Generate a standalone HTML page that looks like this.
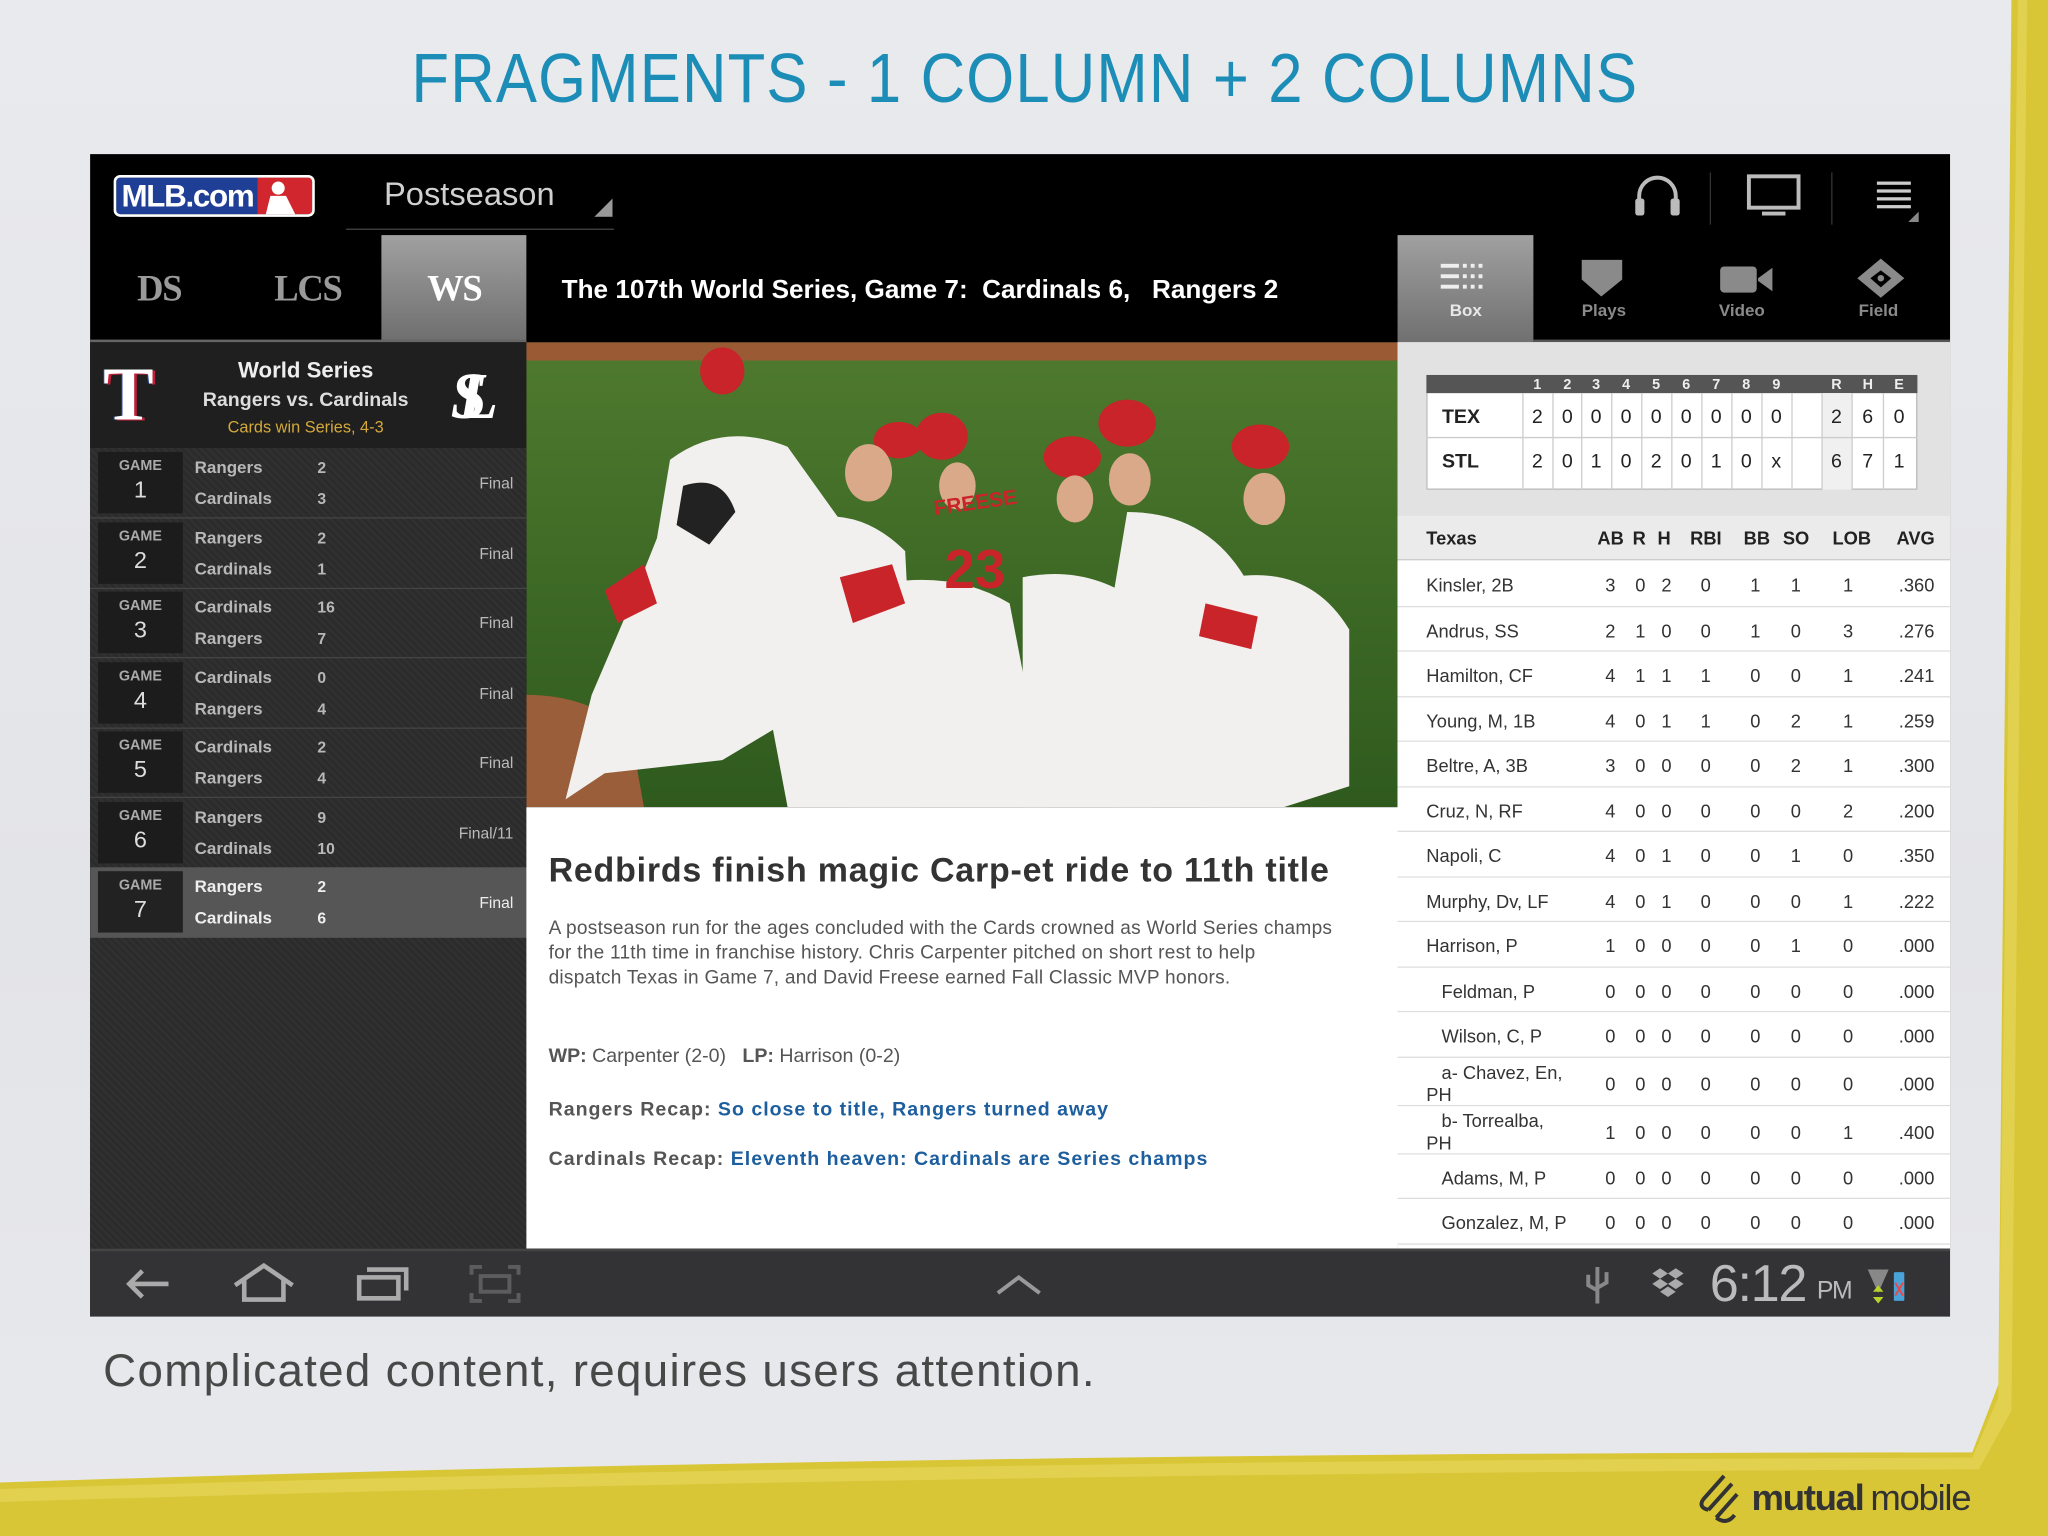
<!DOCTYPE html>
<html><head><meta charset="utf-8"><style>
*{margin:0;padding:0;box-sizing:border-box}
html,body{width:2048px;height:1536px;overflow:hidden;background:#e6e7ea}
#w{position:absolute;left:0;top:0;width:1568px;height:1176px;transform:scale(1.306122);transform-origin:0 0;font-family:"Liberation Sans",sans-serif}
.a{position:absolute}
.t{position:absolute;white-space:nowrap}
.gr{position:absolute;left:6px;width:328px;height:51px}
.gb{position:absolute;left:0;top:2px;width:65px;height:47px;background:#1c1c1c;color:#aaa;text-align:center}
.gb b{display:block;font-size:11px;margin-top:5px;font-weight:bold}
.gb i{display:block;font-style:normal;font-size:18px;color:#ddd;margin-top:2px}
.gn{position:absolute;left:74px;font-size:13px;color:#b8b8b8;font-weight:bold}
.gs{position:absolute;left:168px;font-size:12px;color:#b8b8b8;font-weight:bold}
.gf{position:absolute;right:10px;top:19px;font-size:12px;color:#bbb}
.sr{position:absolute;left:0;width:423px;height:34px;border-bottom:1px solid #ddd;background:#fff;font-size:14px;color:#333}
.sr span{position:absolute;top:10px}
</style></head><body>
<div id="w">
<div class="a" style="left:0;top:0;width:1568px;height:1176px;background:linear-gradient(180deg,#e9eaed,#e3e4e8 60%,#e8e9ec)"></div>
<svg class="a" style="left:0;top:0" width="1568" height="1176">
<path d="M0 1135 Q700 1112 1510 1112 L1530 1060 L1540 0 L1568 0 L1568 1176 L0 1176Z" fill="#d9c636"/>
<path d="M0 1140 Q700 1118 1510 1116 L1530 1070 L1545 0 L1552 0 L1540 1080 L1515 1125 Q700 1128 0 1150Z" fill="#e6d860" opacity=".6"/>
</svg>
<div class="t" style="left:315px;top:30px;font-size:53px;color:#1b8db6;letter-spacing:1px;transform:scaleX(.89);transform-origin:0 0">FRAGMENTS - 1 COLUMN + 2 COLUMNS</div>

<div class="a" style="left:69px;top:118px;width:1424px;height:890px;background:#000;overflow:hidden">
 <div class="a" style="left:18px;top:16px;width:154px;height:32px;border:2px solid #fff;border-radius:5px;background:linear-gradient(90deg,#1e3f95 72%,#d2262e 72%);overflow:hidden">
  <div class="t" style="left:4px;top:1px;font-size:24px;font-weight:bold;color:#fff;letter-spacing:-1px">MLB.com</div>
  <svg class="a" style="left:104px;top:0" width="40" height="30"><circle cx="20" cy="8" r="5" fill="#fff"/><path d="M10 30 L14 14 L26 14 L34 30Z" fill="#fff"/></svg>
 </div>
 <div class="t" style="left:225px;top:17px;font-size:25px;color:#d0d0d0">Postseason</div>
 <div class="a" style="left:196px;top:57px;width:205px;height:1px;background:#444"></div>
 <svg class="a" style="left:386px;top:34px" width="14" height="14"><path d="M14 0 L14 14 L0 14Z" fill="#999"/></svg>
 <svg class="a" style="left:1180px;top:14px" width="40" height="36"><path d="M6 30 V18 A14 14 0 0 1 34 18 V30" fill="none" stroke="#bbb" stroke-width="3"/><rect x="3" y="20" width="7" height="13" rx="2" fill="#bbb"/><rect x="30" y="20" width="7" height="13" rx="2" fill="#bbb"/></svg>
 <svg class="a" style="left:1268px;top:15px" width="44" height="34"><rect x="2" y="2" width="38" height="24" fill="none" stroke="#bbb" stroke-width="3"/><rect x="12" y="29" width="18" height="3" fill="#bbb"/></svg>
 <div class="a" style="left:1240px;top:14px;width:1px;height:40px;background:#333"></div>
 <div class="a" style="left:1333px;top:14px;width:1px;height:40px;background:#333"></div>
 <svg class="a" style="left:1366px;top:18px" width="36" height="36"><g fill="#ccc"><rect x="2" y="3" width="26" height="2.5"/><rect x="2" y="9" width="26" height="2.5"/><rect x="2" y="15" width="26" height="2.5"/><rect x="2" y="21" width="26" height="2.5"/></g><path d="M34 26 L34 34 L26 34Z" fill="#888"/></svg>
 <div class="t" style="left:36px;top:88px;font-size:28px;font-family:'Liberation Serif',serif;font-weight:bold;color:#9a9a9a;letter-spacing:-1px">DS</div>
 <div class="t" style="left:141px;top:88px;font-size:28px;font-family:'Liberation Serif',serif;font-weight:bold;color:#9a9a9a;letter-spacing:-1px">LCS</div>
 <div class="a" style="left:223px;top:62px;width:111px;height:82px;background:linear-gradient(180deg,#a0a0a0,#6e6e6e)"></div>
 <div class="t" style="left:258px;top:88px;font-size:28px;font-family:'Liberation Serif',serif;font-weight:bold;color:#fff;letter-spacing:-1px">WS</div>
 <div class="a" style="left:0;top:142px;width:334px;height:3px;background:#666"></div>
 <div class="t" style="left:361px;top:93px;font-size:20px;font-weight:bold;color:#fff">The 107th World Series, Game 7:&nbsp; Cardinals 6, &nbsp; Rangers 2</div>
 <div class="a" style="left:1001px;top:62px;width:104px;height:82px;background:linear-gradient(180deg,#a0a0a0,#707070)"></div>
 <svg class="a" style="left:1034px;top:82px" width="36" height="26"><g fill="#eee"><rect x="0" y="2" width="14" height="3"/><rect x="17" y="2" width="3" height="3"/><rect x="23" y="2" width="3" height="3"/><rect x="29" y="2" width="3" height="3"/><rect x="0" y="10" width="14" height="3"/><rect x="17" y="10" width="3" height="3"/><rect x="23" y="10" width="3" height="3"/><rect x="29" y="10" width="3" height="3"/><rect x="0" y="18" width="14" height="3"/><rect x="17" y="18" width="3" height="3"/><rect x="23" y="18" width="3" height="3"/><rect x="29" y="18" width="3" height="3"/></g></svg>
 <div class="t" style="left:1041px;top:112px;font-size:13px;font-weight:bold;color:#e8e8e8">Box</div>
 <svg class="a" style="left:1141px;top:80px" width="34" height="30"><path d="M1 1 H32 V16 L16 29 L1 16Z" fill="#8a8a8a"/></svg>
 <div class="t" style="left:1142px;top:112px;font-size:13px;font-weight:bold;color:#8a8a8a">Plays</div>
 <svg class="a" style="left:1247px;top:85px" width="44" height="22"><rect x="1" y="1" width="28" height="20" rx="3" fill="#8a8a8a"/><path d="M30 10 L41 2 V20 L30 12Z" fill="#8a8a8a"/></svg>
 <div class="t" style="left:1247px;top:112px;font-size:13px;font-weight:bold;color:#8a8a8a">Video</div>
 <svg class="a" style="left:1351px;top:78px" width="40" height="34"><path d="M20 2 L38 17 L20 32 L2 17Z" fill="#8a8a8a"/><path d="M20 11 L28 17 L20 24 L12 17Z" fill="#000"/><circle cx="20" cy="17" r="2.5" fill="#8a8a8a"/></svg>
 <div class="t" style="left:1354px;top:112px;font-size:13px;font-weight:bold;color:#8a8a8a">Field</div>
 <div class="a" style="left:1105px;top:142px;width:319px;height:3px;background:#555"></div>

 <div class="a" style="left:0;top:144px;width:334px;height:694px;background:#2b2b2b;background-image:repeating-linear-gradient(45deg,rgba(255,255,255,.025) 0 2px,transparent 2px 4px)">
  <div class="a" style="left:0;top:0;width:334px;height:81px;background:#1f1f1f"></div>
  <div class="t" style="left:10px;top:6px;font-size:58px;font-family:'Liberation Serif',serif;font-weight:bold;color:#fff;text-shadow:2px 1px 0 #c0203a,-1px 0 0 #1e3f95">T</div>
  <div class="t" style="left:92px;top:12px;width:146px;text-align:center;font-size:17px;font-weight:bold;color:#eee">World Series</div>
  <div class="t" style="left:72px;top:36px;width:186px;text-align:center;font-size:15px;font-weight:bold;color:#ddd">Rangers vs. Cardinals</div>
  <div class="t" style="left:92px;top:58px;width:146px;text-align:center;font-size:12.5px;color:#d4a93a">Cards win Series, 4-3</div>
  <div class="t" style="left:276px;top:12px;font-size:50px;font-family:'Liberation Serif',serif;font-style:italic;font-weight:bold;color:#fff;letter-spacing:-22px">SL</div>
  <div class="gr" style="top:82px"><div class="gb"><b>GAME</b><i>1</i></div><div class="gn" style="top:6px">Rangers</div><div class="gs" style="top:7px">2</div><div class="gn" style="top:30px">Cardinals</div><div class="gs" style="top:31px">3</div><div class="gf">Final</div></div>
  <div class="a" style="left:0;top:134px;width:334px;height:1px;background:#444"></div>
  <div class="gr" style="top:136px"><div class="gb"><b>GAME</b><i>2</i></div><div class="gn" style="top:6px">Rangers</div><div class="gs" style="top:7px">2</div><div class="gn" style="top:30px">Cardinals</div><div class="gs" style="top:31px">1</div><div class="gf">Final</div></div>
  <div class="a" style="left:0;top:188px;width:334px;height:1px;background:#444"></div>
  <div class="gr" style="top:189px"><div class="gb"><b>GAME</b><i>3</i></div><div class="gn" style="top:6px">Cardinals</div><div class="gs" style="top:7px">16</div><div class="gn" style="top:30px">Rangers</div><div class="gs" style="top:31px">7</div><div class="gf">Final</div></div>
  <div class="a" style="left:0;top:241px;width:334px;height:1px;background:#444"></div>
  <div class="gr" style="top:243px"><div class="gb"><b>GAME</b><i>4</i></div><div class="gn" style="top:6px">Cardinals</div><div class="gs" style="top:7px">0</div><div class="gn" style="top:30px">Rangers</div><div class="gs" style="top:31px">4</div><div class="gf">Final</div></div>
  <div class="a" style="left:0;top:295px;width:334px;height:1px;background:#444"></div>
  <div class="gr" style="top:296px"><div class="gb"><b>GAME</b><i>5</i></div><div class="gn" style="top:6px">Cardinals</div><div class="gs" style="top:7px">2</div><div class="gn" style="top:30px">Rangers</div><div class="gs" style="top:31px">4</div><div class="gf">Final</div></div>
  <div class="a" style="left:0;top:348px;width:334px;height:1px;background:#444"></div>
  <div class="gr" style="top:350px"><div class="gb"><b>GAME</b><i>6</i></div><div class="gn" style="top:6px">Rangers</div><div class="gs" style="top:7px">9</div><div class="gn" style="top:30px">Cardinals</div><div class="gs" style="top:31px">10</div><div class="gf">Final/11</div></div>
  <div class="a" style="left:0;top:402px;width:334px;height:54px;background:#565656"></div>
  <div class="gr" style="top:403px"><div class="gb" style="background:#222"><b>GAME</b><i>7</i></div><div class="gn" style="top:6px;color:#eee">Rangers</div><div class="gs" style="top:7px;color:#eee">2</div><div class="gn" style="top:30px;color:#eee">Cardinals</div><div class="gs" style="top:31px;color:#eee">6</div><div class="gf" style="color:#eee">Final</div></div>
 </div>

 <svg class="a" style="left:334px;top:144px" width="667" height="356" viewBox="0 0 667 356">
  <defs><linearGradient id="g" x1="0" y1="0" x2="0" y2="1"><stop offset="0" stop-color="#4f7a2e"/><stop offset=".5" stop-color="#3e6a26"/><stop offset="1" stop-color="#2f5a1e"/></linearGradient></defs>
  <rect width="667" height="356" fill="url(#g)"/>
  <rect width="667" height="14" fill="#9a5a34"/>
  <path d="M0 270 Q50 270 80 300 L90 356 L0 356Z" fill="#9a5e3a"/>
  <g fill="#f2f0ee">
   <path d="M110 90 Q150 60 200 80 L250 150 L245 250 L200 290 L150 320 L60 330 L30 350 L50 270 L80 200 L100 150Z"/>
   <path d="M200 140 Q250 120 290 160 L300 356 L200 356 L180 250Z"/>
   <path d="M250 190 Q320 170 370 200 L400 356 L250 356 L240 260Z"/>
   <path d="M380 180 Q430 170 470 200 L480 356 L380 356 L380 250Z"/>
   <path d="M460 130 Q520 130 550 180 L545 356 L450 356 L440 250Z"/>
   <path d="M540 180 Q600 170 630 220 L630 340 L580 356 L520 356 L510 260Z"/>
  </g>
  <g fill="#c8242a">
   <ellipse cx="150" cy="22" rx="17" ry="18"/><ellipse cx="285" cy="75" rx="19" ry="14"/><ellipse cx="318" cy="72" rx="20" ry="18"/>
   <ellipse cx="418" cy="88" rx="22" ry="16"/><ellipse cx="460" cy="62" rx="22" ry="18"/><ellipse cx="562" cy="80" rx="22" ry="17"/>
   <path d="M60 190 L90 170 L100 200 L70 215Z"/><path d="M240 180 L280 170 L290 200 L250 215Z"/><path d="M520 200 L560 210 L555 235 L515 225Z"/>
  </g>
  <g fill="#d9a98a"><ellipse cx="262" cy="100" rx="18" ry="22"/><ellipse cx="462" cy="105" rx="16" ry="20"/><ellipse cx="565" cy="120" rx="16" ry="20"/><ellipse cx="420" cy="120" rx="14" ry="18"/><ellipse cx="330" cy="110" rx="14" ry="18"/></g>
  <path d="M120 110 Q150 100 160 130 L140 155 L115 140Z" fill="#222"/>
  <text x="320" y="188" font-family="Liberation Sans" font-weight="bold" font-size="42" fill="#c8242a">23</text>
  <text x="312" y="130" font-family="Liberation Sans" font-weight="bold" font-size="16" fill="#c8242a" transform="rotate(-8 330 125)">FREESE</text>
 </svg>

 <div class="a" style="left:334px;top:500px;width:667px;height:338px;background:#fff;color:#444">
  <div class="t" style="left:17px;top:33px;font-size:26px;font-weight:bold;color:#333;letter-spacing:.6px">Redbirds finish magic Carp-et ride to 11th title</div>
  <div class="a" style="left:17px;top:84px;width:600px;font-size:14.6px;line-height:19px;color:#555;letter-spacing:.2px">A postseason run for the ages concluded with the Cards crowned as World Series champs for the 11th time in franchise history. Chris Carpenter pitched on short rest to help dispatch Texas in Game 7, and David Freese earned Fall Classic MVP honors.</div>
  <div class="t" style="left:17px;top:182px;font-size:15px;color:#555"><b>WP:</b> Carpenter (2-0) &nbsp; <b>LP:</b> Harrison (0-2)</div>
  <div class="t" style="left:17px;top:223px;font-size:15px;color:#555;letter-spacing:.75px"><b>Rangers Recap:</b> <b style="color:#1d5e9e">So close to title, Rangers turned away</b></div>
  <div class="t" style="left:17px;top:261px;font-size:15px;color:#555;letter-spacing:.75px"><b>Cardinals Recap:</b> <b style="color:#1d5e9e">Eleventh heaven: Cardinals are Series champs</b></div>
 </div>

 <div class="a" style="left:1001px;top:144px;width:423px;height:694px;background:#fff">
  <div class="a" style="left:0;top:0;width:423px;height:133px;background:#e2e2e2"></div>
  <svg class="a" style="left:22px;top:25px" width="378" height="90">
   <rect x="0.5" y="0.5" width="375" height="87" fill="#fff" stroke="#bbb"/>
   <rect x="0" y="0" width="376" height="14" fill="#555"/>
   <rect x="303" y="14" width="23" height="74" fill="#f0f0f0"/>
   <g stroke="#ccc" fill="none"><line x1="0" y1="48" x2="376" y2="48"/>
   <line x1="74" y1="14" x2="74" y2="88"/><line x1="97" y1="14" x2="97" y2="88"/><line x1="119" y1="14" x2="119" y2="88"/><line x1="142" y1="14" x2="142" y2="88"/><line x1="165" y1="14" x2="165" y2="88"/><line x1="188" y1="14" x2="188" y2="88"/><line x1="211" y1="14" x2="211" y2="88"/><line x1="234" y1="14" x2="234" y2="88"/><line x1="257" y1="14" x2="257" y2="88"/><line x1="280" y1="14" x2="280" y2="88"/><line x1="303" y1="14" x2="303" y2="88"/><line x1="326" y1="14" x2="326" y2="88"/><line x1="350" y1="14" x2="350" y2="88"/></g>
   <g font-family="Liberation Sans" font-size="11" font-weight="bold" fill="#eee" text-anchor="middle">
    <text x="85" y="11">1</text><text x="108" y="11">2</text><text x="130" y="11">3</text><text x="153" y="11">4</text><text x="176" y="11">5</text><text x="199" y="11">6</text><text x="222" y="11">7</text><text x="245" y="11">8</text><text x="268" y="11">9</text><text x="314" y="11">R</text><text x="338" y="11">H</text><text x="362" y="11">E</text>
   </g>
   <g font-family="Liberation Sans" font-size="15" fill="#222" text-anchor="middle">
    <text x="12" y="37" font-weight="bold" text-anchor="start">TEX</text>
    <text x="85" y="37">2</text><text x="108" y="37">0</text><text x="130" y="37">0</text><text x="153" y="37">0</text><text x="176" y="37">0</text><text x="199" y="37">0</text><text x="222" y="37">0</text><text x="245" y="37">0</text><text x="268" y="37">0</text><text x="314" y="37">2</text><text x="338" y="37">6</text><text x="362" y="37">0</text>
    <text x="12" y="71" font-weight="bold" text-anchor="start">STL</text>
    <text x="85" y="71">2</text><text x="108" y="71">0</text><text x="130" y="71">1</text><text x="153" y="71">0</text><text x="176" y="71">2</text><text x="199" y="71">0</text><text x="222" y="71">1</text><text x="245" y="71">0</text><text x="268" y="71">x</text><text x="314" y="71">6</text><text x="338" y="71">7</text><text x="362" y="71">1</text>
   </g>
  </svg>
  <div class="a" style="left:0;top:133px;width:423px;height:34px;background:#ebebeb;border-bottom:1px solid #ccc;font-size:14px;font-weight:bold;color:#222">
   <span class="a" style="left:22px;top:9px">Texas</span><span class="a" style="left:153px;top:9px">AB</span><span class="a" style="left:180px;top:9px">R</span><span class="a" style="left:199px;top:9px">H</span><span class="a" style="left:224px;top:9px">RBI</span><span class="a" style="left:265px;top:9px">BB</span><span class="a" style="left:295px;top:9px">SO</span><span class="a" style="left:333px;top:9px">LOB</span><span class="a" style="left:382px;top:9px">AVG</span>
  </div>
  <div id="rows"></div>
 </div>

 <div class="a" style="left:0;top:838px;width:1424px;height:52px;background:#333336;border-top:2px solid #444">
  <svg class="a" style="left:24px;top:10px" width="40" height="30"><path d="M36 15 H6 M16 5 L6 15 L16 25" fill="none" stroke="#aaa" stroke-width="3.5"/></svg>
  <svg class="a" style="left:108px;top:8px" width="50" height="32"><path d="M3 18 L25 3 L47 18 M10 14 V29 H40 V14" fill="none" stroke="#aaa" stroke-width="3.5"/></svg>
  <svg class="a" style="left:202px;top:10px" width="44" height="30"><path d="M10 4 H40 V20 M4 10 H34 V26 H4Z" fill="none" stroke="#aaa" stroke-width="3.5"/></svg>
  <svg class="a" style="left:290px;top:10px" width="40" height="30" opacity=".35"><path d="M2 8 V2 H10 M30 2 H38 V8 M38 22 V28 H30 M10 28 H2 V22" fill="none" stroke="#aaa" stroke-width="3"/><rect x="9" y="9" width="22" height="12" fill="none" stroke="#aaa" stroke-width="3"/></svg>
  <svg class="a" style="left:693px;top:16px" width="36" height="20"><path d="M2 16 L18 4 L34 16" fill="none" stroke="#999" stroke-width="3"/></svg>
  <svg class="a" style="left:1144px;top:10px" width="20" height="34"><path d="M10 2 V30 M3 8 V16 L10 20 M17 6 V14 L10 18" fill="none" stroke="#888" stroke-width="3"/></svg>
  <svg class="a" style="left:1196px;top:12px" width="24" height="26"><g fill="#aaa"><path d="M6 1 L12 5 L6 9 L0 5Z"/><path d="M18 1 L24 5 L18 9 L12 5Z"/><path d="M6 9 L12 13 L6 17 L0 13Z"/><path d="M18 9 L24 13 L18 17 L12 13Z"/><path d="M12 15 L18 19 L12 23 L6 19Z"/></g></svg>
  <div class="t" style="left:1240px;top:3px;font-size:40px;color:#bbb;letter-spacing:-1px">6:12</div>
  <div class="t" style="left:1322px;top:20px;font-size:19px;color:#bbb;letter-spacing:-1px">PM</div>
  <svg class="a" style="left:1360px;top:12px" width="36" height="30"><path d="M1 2 H17 L9 20Z" fill="#888"/><path d="M9 14 L13 19 H5Z M9 28 L13 23 H5Z" fill="#b8d42a"/><rect x="21" y="4" width="8" height="22" rx="1" fill="#4aa3d8"/><path d="M22 12 L28 22 M28 12 L22 22" stroke="#e84848" stroke-width="1.5"/></svg>
 </div>
</div>

<div class="t" style="left:79px;top:1030px;font-size:35px;color:#484848;letter-spacing:1px">Complicated content, requires users attention.</div>
<svg class="a" style="left:1298px;top:1126px" width="240" height="44">
 <g fill="none" stroke="#333" stroke-width="3"><path d="M6 22 L22 4 M10 30 L28 10 M16 36 L32 18 M6 22 Q2 28 10 30 M16 36 Q24 42 30 34"/></g>
 <text x="43" y="30" font-family="Liberation Sans" font-weight="bold" font-size="28" fill="#333" letter-spacing="-1">mutual</text>
 <text x="134" y="30" font-family="Liberation Sans" font-size="28" fill="#333" letter-spacing="-1">mobile</text>
</svg>
</div>
<script>
var d=[["Kinsler, 2B","3","0","2","0","1","1","1",".360"],["Andrus, SS","2","1","0","0","1","0","3",".276"],["Hamilton, CF","4","1","1","1","0","0","1",".241"],["Young, M, 1B","4","0","1","1","0","2","1",".259"],["Beltre, A, 3B","3","0","0","0","0","2","1",".300"],["Cruz, N, RF","4","0","0","0","0","0","2",".200"],["Napoli, C","4","0","1","0","0","1","0",".350"],["Murphy, Dv, LF","4","0","1","0","0","0","1",".222"],["Harrison, P","1","0","0","0","0","1","0",".000"],["&nbsp;&nbsp;&nbsp;Feldman, P","0","0","0","0","0","0","0",".000"],["&nbsp;&nbsp;&nbsp;Wilson, C, P","0","0","0","0","0","0","0",".000"],["&nbsp;&nbsp;&nbsp;a- Chavez, En,<br>PH","0","0","0","0","0","0","0",".000"],["&nbsp;&nbsp;&nbsp;b- Torrealba,<br>PH","1","0","0","0","0","0","1",".400"],["&nbsp;&nbsp;&nbsp;Adams, M, P","0","0","0","0","0","0","0",".000"],["&nbsp;&nbsp;&nbsp;Gonzalez, M, P","0","0","0","0","0","0","0",".000"]];
var x=[159,182,202,232,270,301,341,411],h="",t=168;
d.forEach(function(r,i){var hh=(i==11||i==12)?37:34.5;var two=r[0].indexOf("<br>")>0;
h+='<div class="sr" style="top:'+t+'px;height:'+hh+'px"><span style="left:22px;top:'+(two?3:10)+'px;line-height:17px">'+r[0]+'</span>';
for(var k=1;k<9;k++){h+='<span style="'+(k==8?'right:12px':'left:'+x[k-1]+'px')+';top:'+(two?12:10)+'px">'+r[k]+'</span>';}
h+='</div>';t+=hh;});
document.getElementById("rows").innerHTML=h;
</script>
</body></html>
